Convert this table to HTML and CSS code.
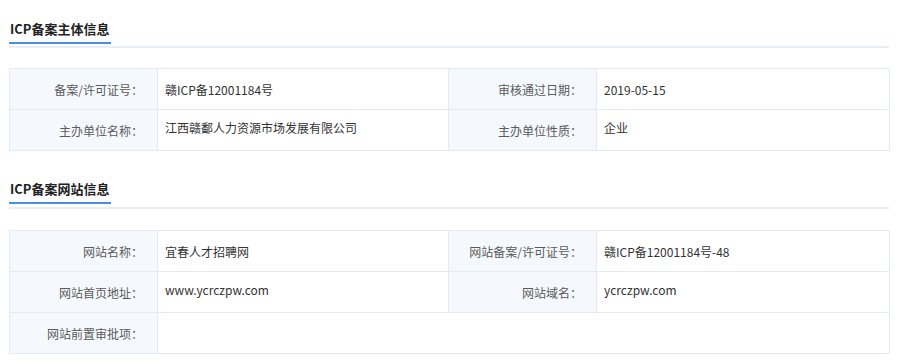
FILE: index.html
```html
<!DOCTYPE html>
<html lang="zh-CN">
<head>
<meta charset="utf-8">
<title>ICP备案信息</title>
<link rel="stylesheet" href="styles.css">
</head>
<body>
<div class="page">
  <section class="section first">
    <div class="head"><h2 class="title">ICP备案主体信息</h2></div>
    <div class="rule"></div>
    <table class="info">
      <colgroup><col class="c-l1"><col class="c-v1"><col class="c-l2"><col class="c-v2"></colgroup>
      <tr>
        <th>备案/许可证号：</th><td>赣ICP备12001184号</td>
        <th>审核通过日期：</th><td>2019-05-15</td>
      </tr>
      <tr>
        <th>主办单位名称：</th><td class="up">江西赣鄱人力资源市场发展有限公司</td>
        <th>主办单位性质：</th><td class="up">企业</td>
      </tr>
    </table>
  </section>
  <section class="section second">
    <div class="head"><h2 class="title">ICP备案网站信息</h2></div>
    <div class="rule"></div>
    <table class="info">
      <colgroup><col class="c-l1"><col class="c-v1"><col class="c-l2"><col class="c-v2"></colgroup>
      <tr>
        <th>网站名称：</th><td>宜春人才招聘网</td>
        <th>网站备案/许可证号：</th><td>赣ICP备12001184号-48</td>
      </tr>
      <tr>
        <th>网站首页地址：</th><td class="up">www.ycrczpw.com</td>
        <th>网站域名：</th><td class="up">ycrczpw.com</td>
      </tr>
      <tr>
        <th>网站前置审批项：</th><td colspan="3"></td>
      </tr>
    </table>
  </section>
</div>
</body>
</html>
```

FILE: styles.css
```css
html, body {
  margin: 0;
  padding: 0;
  background: #fff;
}
body {
  font-family: "Noto Sans CJK SC", "Open Sans", sans-serif;
  color: #333;
}
.page {
  width: 880px;
  padding-left: 9px;
}
.section.first {
  padding-top: 15px;
}
.section.second {
  padding-top: 24px;
}
.head {
  height: 25px;
}
.title {
  display: inline-block;
  margin: 0;
  padding: 0 1px 3px 1px;
  font-size: 13px;
  line-height: 20px;
  font-weight: 700;
  color: #222;
  border-bottom: 2px solid #4a8ee2;
}
.rule {
  margin-top: 6px;
  height: 2px;
  background: #e8eff6;
}
.info {
  margin-top: 20px;
  width: 880px;
  border-collapse: collapse;
  table-layout: fixed;
  font-size: 12px;
}
.second .rule {
  margin-top: 7px;
}
.second .info {
  margin-top: 21px;
}
.c-l1 { width: 148px; }
.c-v1 { width: 291px; }
.c-l2 { width: 148px; }
.c-v2 { width: 293px; }
.info th, .info td {
  border: 1px solid #e3eaf1;
  height: 41px;
  padding: 0;
  box-sizing: border-box;
}
.info th {
  background: #f5f9fd;
  color: #5a5a5a;
  font-weight: 400;
  text-align: right;
  padding-right: 14px;
}
.info td {
  color: #333;
  text-align: left;
  padding-left: 7px;
}
.info td.up {
  padding-bottom: 5px;
}
```
